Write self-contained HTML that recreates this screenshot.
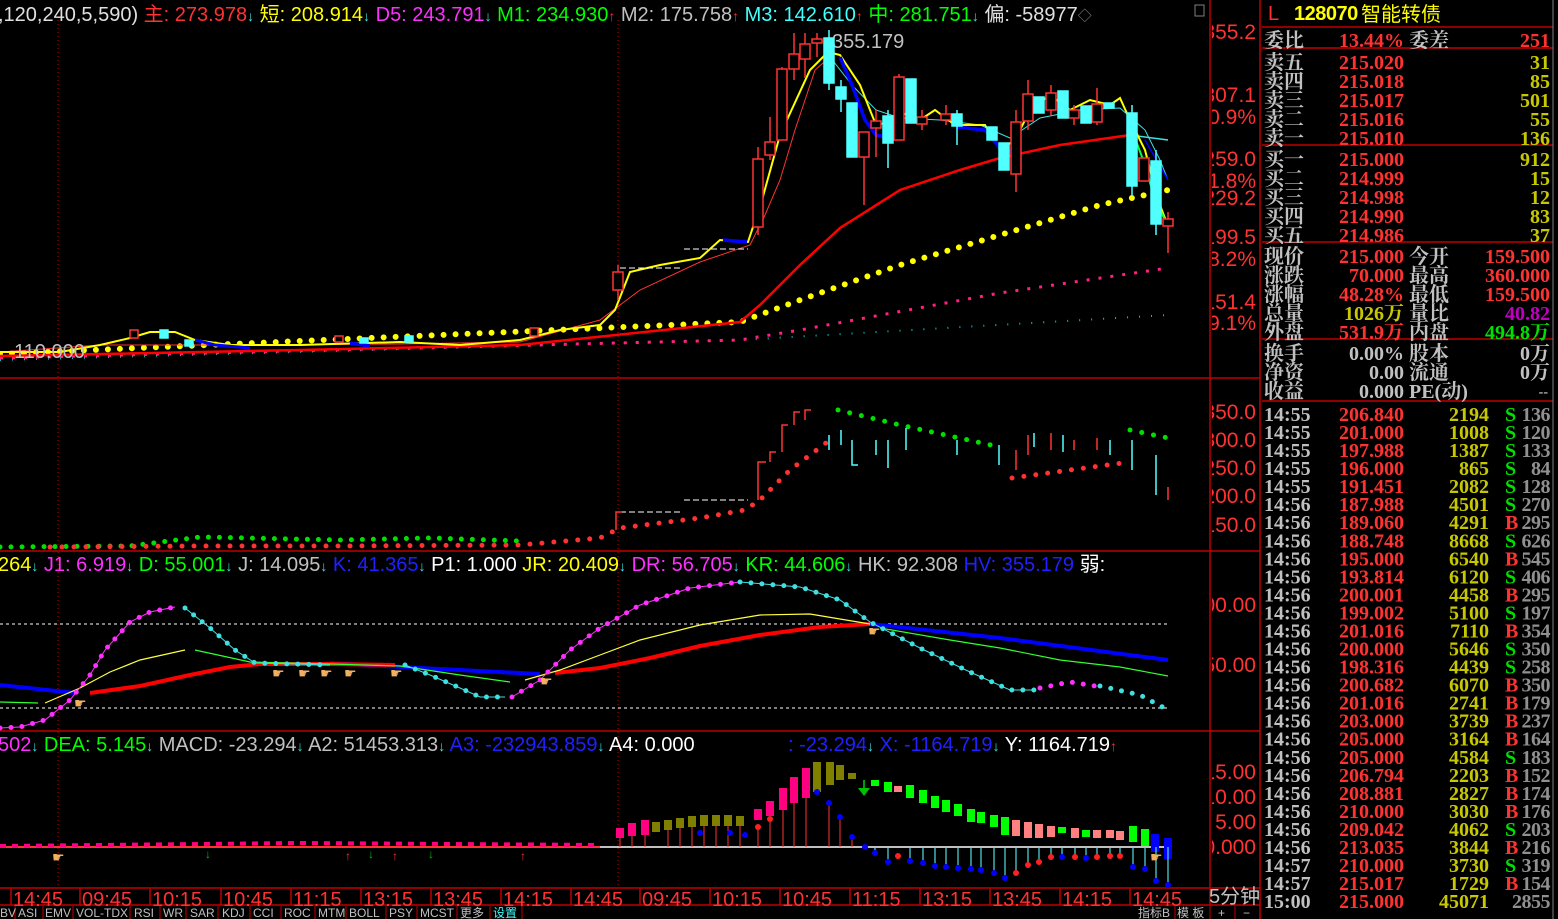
<!DOCTYPE html>
<html><head><meta charset="utf-8"><style>
html,body{margin:0;padding:0;background:#000;width:1558px;height:919px;overflow:hidden}
svg{display:block}
.h{font-family:"Liberation Sans","Noto Sans CJK SC",sans-serif;font-size:20px}
.ax{font-family:"Liberation Sans",sans-serif;font-size:21px;fill:#ff3232;text-anchor:end}
.r{font-family:"Liberation Serif","Noto Serif CJK SC",serif;font-size:20px;font-weight:bold}
.t{font-family:"Liberation Sans","Noto Sans CJK SC",sans-serif;font-size:12px;fill:#c0c0c0}
.e{text-anchor:end}
</style></head><body>
<svg width="1558" height="919" viewBox="0 0 1558 919" xmlns="http://www.w3.org/2000/svg">
<defs><clipPath id="axc"><rect x="1212" y="0" width="48" height="888"/></clipPath></defs>
<rect width="1558" height="919" fill="#000"/>
<g stroke="#c00000" stroke-width="1.5" fill="none">
<path d="M0 378H1260M0 551H1260M0 731H1260M0 888H1260M0 905H1260M1210 0V905M1260 0V919"/>
<path d="M1262 27H1553M1262 48H1553M1262 145H1553M1262 242H1553M1262 339H1553M1262 401H1553"/>
</g>
<path d="M1553 0V919" stroke="#808080"/>
<path d="M58 20V888M618 20V888" stroke="#c00000" stroke-dasharray="1 3"/>

<text class="h" y="21" x="-2"><tspan fill="#e0e0e0">,120,240,5,590)</tspan><tspan fill="#ff3232"> 主: 273.978</tspan><tspan fill="#40e0e0" font-size="14">↓</tspan><tspan fill="#ffff00"> 短: 208.914</tspan><tspan fill="#40e0e0" font-size="14">↓</tspan><tspan fill="#ff30ff"> D5: 243.791</tspan><tspan fill="#40e0e0" font-size="14">↓</tspan><tspan fill="#00ff00"> M1: 234.930</tspan><tspan fill="#ff3232" font-size="14">↑</tspan><tspan fill="#c0c0c0"> M2: 175.758</tspan><tspan fill="#ff3232" font-size="14">↑</tspan><tspan fill="#40ffff"> M3: 142.610</tspan><tspan fill="#ff3232" font-size="14">↑</tspan><tspan fill="#00ff00"> 中: 281.751</tspan><tspan fill="#40e0e0" font-size="14">↓</tspan><tspan fill="#e0e0e0"> 偏: -58977</tspan><tspan fill="#808080" font-size="14">◇</tspan></text>
<rect x="1195" y="5" width="9" height="11" fill="none" stroke="#808080"/>

<g clip-path="url(#axc)">
<text class="ax" x="1256" y="39">355.2</text>
<text class="ax" x="1256" y="102">307.1</text>
<text class="ax" x="1256" y="124">10.9%</text>
<text class="ax" x="1256" y="166">259.0</text>
<text class="ax" x="1256" y="188">21.8%</text>
<text class="ax" x="1256" y="205">229.2</text>
<text class="ax" x="1256" y="244">199.5</text>
<text class="ax" x="1256" y="266">38.2%</text>
<text class="ax" x="1256" y="309">151.4</text>
<text class="ax" x="1256" y="330">49.1%</text>
<text class="ax" x="1256" y="419">350.0</text>
<text class="ax" x="1256" y="447">300.0</text>
<text class="ax" x="1256" y="475">250.0</text>
<text class="ax" x="1256" y="503">200.0</text>
<text class="ax" x="1256" y="532">150.0</text>
<text class="ax" x="1256" y="612">100.00</text>
<text class="ax" x="1256" y="672">50.00</text>
<text class="ax" x="1256" y="779">15.00</text>
<text class="ax" x="1256" y="804">10.00</text>
<text class="ax" x="1256" y="829">5.00</text>
<text class="ax" x="1256" y="854">0.000</text>
</g>

<polyline fill="none" stroke="#00c0c0" stroke-width="2" stroke-dasharray="1 11" points="0,360 740,340 1168,315"/>
<polyline fill="none" stroke="#ff2080" stroke-width="3" stroke-dasharray="3 9" points="0,358 740,340 800,330 1000,293 1168,268"/>
<polyline fill="none" stroke="#ffff00" stroke-width="6" stroke-linecap="round" stroke-dasharray="0 12" points="0,354 740,322 800,300 900,265 1000,235 1100,205 1168,190"/>
<polyline fill="none" stroke="#ff0000" stroke-width="2.5" points="0,356 300,350 520,345 740,322 760,305 800,265 840,228 900,190 960,170 1000,158 1060,145 1130,135"/>
<polyline fill="none" stroke="#40e0e0" stroke-width="1.5" points="1130,135 1168,140"/>
<polyline fill="none" stroke="#ff3232" stroke-width="1" points="0,352 100,345 200,345 400,344 520,342 600,320 640,290 700,262 750,245 765,215 780,180 795,130 815,70 830,57"/>
<polyline fill="none" stroke="#40e0e0" stroke-width="1" points="830,57 852,85 876,110 900,118 940,120 980,125 1010,138 1040,118 1080,110 1120,108 1145,130 1160,160 1168,180"/>
<polyline fill="none" stroke="#0000ff" stroke-width="1.5" points="1145,140 1168,180"/>
<polyline fill="none" stroke="#ffff00" stroke-width="2" points="0,352 60,352 100,345 130,338 150,332 175,332 195,340 230,345 300,345 400,342 460,345 520,340 560,330 600,325 615,310 630,272 660,265 700,258 720,240 748,242 762,200 780,135 810,70 828,52 840,55 860,85 876,125 890,122 900,112 920,120 935,110 955,125 985,125 1000,150 1015,140 1030,110 1050,95 1070,110 1090,100 1110,105 1120,98 1130,120 1145,150 1158,200 1168,226"/>
<g fill="none" stroke="#0000ff" stroke-width="3.5">
<polyline points="723,240 747,242"/>
<polyline points="840,57 852,85 865,120 876,135 887,137"/>
<polyline points="957,127 985,130 1000,148 1015,153"/>
<polyline points="195,340 215,345 250,348" stroke-width="3"/>
<polyline points="350,343 370,346"/>
</g>
<polyline fill="none" stroke="#00ff40" stroke-width="2" points="1132,130 1145,165 1155,200 1168,226"/>
<text x="14" y="358" class="h" fill="#c0c0c0" font-size="19">110.000</text>
<text x="832" y="48" class="h" fill="#c0c0c0">355.179</text>
<path d="M684 249H748M620 268H680" stroke="#fff" stroke-dasharray="6 3"/>
<g stroke="#ff3232" fill="none" stroke-width="1.5">
<path d="M618 265V300M758 147V235M770 117V160M782 67V140M794 33V80M805 33V78M817 33V57M864 132V205M876 110V157M899 74V140M922 110V130M946 105V125M1016 110V192M1028 80V130M1051 85V115M1074 105V125M1097 88V125M1168 212V253"/>
<rect x="613" y="272" width="10" height="18" fill="#000"/>
<rect x="753" y="159" width="10" height="68" fill="#000"/>
<rect x="765" y="142" width="10" height="13" fill="#000"/>
<rect x="777" y="69" width="10" height="71" fill="#000"/>
<rect x="789" y="54" width="10" height="15" fill="#000"/>
<rect x="800" y="44" width="10" height="15" fill="#000"/>
<rect x="812" y="39" width="10" height="4" fill="#000"/>
<rect x="859" y="132" width="10" height="25" fill="#000"/>
<rect x="871" y="121" width="10" height="7" fill="#000"/>
<rect x="894" y="77" width="10" height="63" fill="#000"/>
<rect x="917" y="117" width="10" height="7" fill="#000"/>
<rect x="941" y="114" width="10" height="6" fill="#000"/>
<rect x="1011" y="122" width="10" height="52" fill="#000"/>
<rect x="1023" y="94" width="10" height="27" fill="#000"/>
<rect x="1046" y="93" width="10" height="17" fill="#000"/>
<rect x="1069" y="110" width="10" height="8" fill="#000"/>
<rect x="1092" y="104" width="10" height="18" fill="#000"/>
<rect x="1139" y="158" width="10" height="23" fill="#000"/>
<rect x="1163" y="219" width="10" height="7" fill="#000"/>
<rect x="130" y="330" width="8" height="8" fill="#000"/><rect x="335" y="336" width="8" height="6" fill="#000"/><rect x="530" y="328" width="8" height="8" fill="#000"/>
</g>
<g stroke="#50ffff" fill="#50ffff" stroke-width="1.5">
<path d="M829 30V90M841 80V112M888 110V168M957 110V145M1132 105V195M1156 150V235"/>
<rect x="824" y="38" width="10" height="45"/>
<rect x="836" y="87" width="10" height="12"/>
<rect x="847" y="103" width="10" height="54"/>
<rect x="883" y="116" width="10" height="27"/>
<rect x="906" y="79" width="10" height="44"/>
<rect x="952" y="114" width="10" height="12"/>
<rect x="987" y="127" width="10" height="13"/>
<rect x="999" y="143" width="10" height="27"/>
<rect x="1034" y="97" width="10" height="16"/>
<rect x="1058" y="91" width="10" height="27"/>
<rect x="1081" y="106" width="10" height="17"/>
<rect x="1104" y="103" width="10" height="5"/>
<rect x="1127" y="113" width="10" height="73"/>
<rect x="1151" y="161" width="10" height="63"/>
<rect x="160" y="330" width="8" height="8"/><rect x="185" y="340" width="8" height="6"/><rect x="360" y="338" width="8" height="5"/><rect x="405" y="336" width="8" height="6"/>
</g>

<polyline fill="none" stroke="#00e000" stroke-width="5" stroke-linecap="round" stroke-dasharray="0 11" points="0,547 130,546 200,537 340,540 430,538 520,541"/>
<polyline fill="none" stroke="#ff3232" stroke-width="5" stroke-linecap="round" stroke-dasharray="0 12" points="50,547 200,546 340,546 520,545 600,538 620,528 700,518 745,510 760,500 790,470 830,440"/>
<polyline fill="none" stroke="#00e000" stroke-width="5" stroke-linecap="round" stroke-dasharray="0 12" points="838,410 900,425 1000,447"/>
<polyline fill="none" stroke="#ff3232" stroke-width="5" stroke-linecap="round" stroke-dasharray="0 12" points="1012,478 1070,470 1130,462"/>
<polyline fill="none" stroke="#00e000" stroke-width="5" stroke-linecap="round" stroke-dasharray="0 12" points="1130,430 1168,438"/>
<path d="M620 512H680M684 500H748" stroke="#fff" stroke-dasharray="6 3"/>
<g stroke="#ff3232" stroke-width="1.5" fill="none">
<path d="M616 530V512H622M758 500V462H766M770 462V452H776M782 452V425H788M794 425V412H800M805 420V410H811M1016 470V450M1028 455V435M1051 450V433M1074 450V440M1097 450V438M1168 500V487"/>
</g>
<g stroke="#50ffff" stroke-width="1.5" fill="none">
<path d="M829 435V450M841 430V445M852 440V465H858M876 440V455M888 440V468M906 428V450M957 440V455M999 445V465M1034 433V447M1063 435V452M1132 440V470M1156 455V495M1110 440V455"/>
</g>

<text class="h" y="571" x="-2"><tspan fill="#ffff00">264</tspan><tspan fill="#40e0e0" font-size="14">↓</tspan><tspan fill="#ff30ff"> J1: 6.919</tspan><tspan fill="#40e0e0" font-size="14">↓</tspan><tspan fill="#00ff00"> D: 55.001</tspan><tspan fill="#40e0e0" font-size="14">↓</tspan><tspan fill="#c0c0c0"> J: 14.095</tspan><tspan fill="#40e0e0" font-size="14">↓</tspan><tspan fill="#2020ff"> K: 41.365</tspan><tspan fill="#40e0e0" font-size="14">↓</tspan><tspan fill="#fff"> P1: 1.000</tspan><tspan fill="#ffff00"> JR: 20.409</tspan><tspan fill="#40e0e0" font-size="14">↓</tspan><tspan fill="#ff30ff"> DR: 56.705</tspan><tspan fill="#40e0e0" font-size="14">↓</tspan><tspan fill="#00ff00"> KR: 44.606</tspan><tspan fill="#40e0e0" font-size="14">↓</tspan><tspan fill="#c0c0c0"> HK: 92.308</tspan><tspan fill="#2020ff"> HV: 355.179</tspan><tspan fill="#fff"> 弱: </tspan></text>
<path d="M0 624H1168M0 708H1168" stroke="#fff" stroke-dasharray="3 3"/>
<polyline fill="none" stroke="#0000ff" stroke-width="4" points="0,685 75,693"/>
<polyline fill="none" stroke="#0000ff" stroke-width="4" points="330,663 420,668 540,674"/>
<polyline fill="none" stroke="#0000ff" stroke-width="4" points="870,624 1000,638 1168,660"/>
<polyline fill="none" stroke="#ff0000" stroke-width="4" points="90,693 140,686 190,675 230,667 260,664 330,664 395,665"/>
<polyline fill="none" stroke="#ff0000" stroke-width="4" points="555,673 600,668 650,658 700,646 760,635 820,627 870,624"/>
<polyline fill="none" stroke="#30ff30" stroke-width="1.2" points="195,650 250,662 330,664 400,666 460,675 510,682"/>
<polyline fill="none" stroke="#30ff30" stroke-width="1.2" points="880,628 950,640 1000,648 1060,660 1120,667 1168,676"/>
<polyline fill="none" stroke="#30ff30" stroke-width="1.2" points="0,702 38,703"/>
<polyline fill="none" stroke="#ffff40" stroke-width="1.2" points="45,703 80,688 110,672 140,660 185,650"/>
<polyline fill="none" stroke="#ffff40" stroke-width="1.2" points="525,680 560,670 600,655 640,640 700,625 760,615 810,614 870,624"/>
<g fill="none" stroke-width="1">
<polyline stroke="#ff30ff" points="0,728 20,727 45,720 70,700 90,675 105,650 130,622 150,612 175,607"/>
<polyline stroke="#40e0e0" points="185,608 210,628 235,650 255,663 330,665"/>
<polyline stroke="#40e0e0" points="405,665 430,675 460,688 480,697 505,697"/>
<polyline stroke="#ff30ff" points="512,697 540,680 570,650 600,628 640,605 690,588 740,582"/>
<polyline stroke="#40e0e0" points="740,582 800,587 840,600 870,622 920,648 970,672 1010,690 1035,690"/>
</g>
<g fill="none" stroke-width="5" stroke-linecap="round" stroke-dasharray="0 11">
<polyline stroke="#ff30ff" points="0,728 20,727 45,720 70,700 90,675 105,650 130,622 150,612 175,607"/>
<polyline stroke="#40e0e0" points="185,608 210,628 235,650 255,663 330,665"/>
<polyline stroke="#40e0e0" points="405,665 430,675 460,688 480,697 505,697"/>
<polyline stroke="#ff30ff" points="512,697 540,680 570,650 600,628 640,605 690,588 740,582"/>
<polyline stroke="#40e0e0" points="740,582 800,587 840,600 870,622 920,648 970,672 1010,690 1035,690"/>
<polyline stroke="#ff30ff" points="1040,688 1070,682 1095,686"/>
<polyline stroke="#40e0e0" points="1100,686 1140,695 1168,710"/>
</g>
<g fill="#f0b060" font-size="14" font-family="sans-serif">
<text x="74" y="708">☛</text><text x="272" y="678">☛</text><text x="298" y="678">☛</text><text x="320" y="678">☛</text><text x="344" y="678">☛</text><text x="390" y="678">☛</text><text x="540" y="686">☛</text><text x="868" y="636">☛</text>
</g>

<text class="h" y="751" x="-2"><tspan fill="#ff30ff">502</tspan><tspan fill="#40e0e0" font-size="14">↓</tspan><tspan fill="#00ff00"> DEA: 5.145</tspan><tspan fill="#40e0e0" font-size="14">↓</tspan><tspan fill="#c0c0c0"> MACD: -23.294</tspan><tspan fill="#40e0e0" font-size="14">↓</tspan><tspan fill="#c0c0c0"> A2: 51453.313</tspan><tspan fill="#40e0e0" font-size="14">↓</tspan><tspan fill="#2020ff"> A3: -232943.859</tspan><tspan fill="#40e0e0" font-size="14">↓</tspan><tspan fill="#fff"> A4: 0.000</tspan></text>
<text class="h" y="751" x="788"><tspan fill="#2020ff">: -23.294</tspan><tspan fill="#40e0e0" font-size="14">↓</tspan><tspan fill="#2020ff"> X: -1164.719</tspan><tspan fill="#40e0e0" font-size="14">↓</tspan><tspan fill="#fff"> Y: 1164.719</tspan><tspan fill="#ff3232" font-size="14">↑</tspan></text>
<path d="M0 847H1168" stroke="#fff" stroke-width="1.5"/>
<path d="M0 847H600" stroke="#ff3232" stroke-width="2"/>
<g stroke="#ff3232" stroke-width="1"><path d="M620 847V832M632 847V828M645 847V826M668 847V825M680 847V823M692 847V822M704 847V821M716 847V820M728 847V820M740 847V820M758 847V827M770 847V819M783 847V805M794 847V795M806 847V792M829 847V803M840 847V817M852 847V837"/></g>
<g stroke="#ff0080" stroke-width="8"><path d="M620 838V828M632 836V823M645 835V820M758 820V809M770 816V801M783 810V788M794 803V777M806 798V768"/></g>
<g stroke="#808000" stroke-width="8"><path d="M656 832V822M668 830V820M680 828V818M692 827V816M704 826V815M716 826V815M728 826V815M740 826V816M817 792V762M830 785V762M840 780V765M852 779V773"/></g>
<path d="M864 795V780" stroke="#00a000" stroke-width="2"/><path d="M858 788L864 796L870 788Z" fill="#00c000"/>
<g stroke="#00ff00" stroke-width="8"><path d="M875 786V780M888 792V782M910 798V785M923 803V790M935 808V796M946 812V800M958 816V804M971 822V809M981 823V812M994 827V815M1005 835V817M1062 833V827M1086 837V830M1133 842V826M1145 846V829"/></g>
<g stroke="#ff8080" stroke-width="8"><path d="M898 792V786M1016 836V820M1028 838V822M1039 838V824M1051 837V826M1075 838V828M1097 838V830M1110 838V830M1120 840V831"/></g>
<g stroke="#0000ff" stroke-width="8"><path d="M1155 852V834M1168 859V838"/></g>
<g stroke="#50e0e0" stroke-width="1.2"><path d="M875 847V853M888 847V862M910 847V861M923 847V863M935 847V866M946 847V867M958 847V868M971 847V869M981 847V870M994 847V873M1005 847V878M1016 847V873M1028 847V865M1039 847V862M1051 847V857M1062 847V857M1075 847V857M1086 847V858M1097 847V857M1110 847V856M1120 847V856M1133 847V867M1145 847V869M1156 847V881M1168 847V885"/></g>
<g fill="#0000ff"><circle cx="817" cy="792" r="3"/><circle cx="829" cy="803" r="3"/><circle cx="840" cy="817" r="3"/><circle cx="852" cy="837" r="3"/><circle cx="865" cy="847" r="3"/><circle cx="875" cy="853" r="3"/><circle cx="888" cy="862" r="3"/><circle cx="910" cy="861" r="3"/><circle cx="923" cy="863" r="3"/><circle cx="935" cy="866" r="3"/><circle cx="946" cy="867" r="3"/><circle cx="958" cy="868" r="3"/><circle cx="971" cy="869" r="3"/><circle cx="981" cy="870" r="3"/><circle cx="994" cy="873" r="3"/><circle cx="1005" cy="878" r="3"/><circle cx="1062" cy="857" r="3"/><circle cx="1086" cy="858" r="3"/><circle cx="1133" cy="867" r="3"/><circle cx="1145" cy="869" r="3"/><circle cx="1156" cy="881" r="3"/><circle cx="1168" cy="885" r="3"/><circle cx="700" cy="833" r="3"/><circle cx="730" cy="833" r="3"/><circle cx="745" cy="835" r="3"/></g>
<g fill="#ff2020"><circle cx="1016" cy="873" r="3"/><circle cx="1028" cy="865" r="3"/><circle cx="1039" cy="862" r="3"/><circle cx="1051" cy="857" r="3"/><circle cx="1075" cy="857" r="3"/><circle cx="1097" cy="857" r="3"/><circle cx="1110" cy="856" r="3"/><circle cx="1120" cy="856" r="3"/><circle cx="758" cy="827" r="3"/><circle cx="770" cy="819" r="3"/><circle cx="898" cy="856" r="3"/></g>
<g fill="#ff3232" font-size="12" font-family="sans-serif"><text x="345" y="860">↑</text><text x="392" y="860">↑</text><text x="520" y="860">↑</text></g>
<g fill="#00c000" font-size="12" font-family="sans-serif"><text x="205" y="858">↓</text><text x="368" y="858">↓</text><text x="428" y="858">↓</text></g>
<g fill="#f0b060" font-size="14" font-family="sans-serif"><text x="52" y="862">☛</text><text x="1150" y="862">☛</text></g>
<polyline fill="none" stroke="#ff0080" stroke-width="4" stroke-dasharray="6 6" points="0,846 300,843 600,845"/>

<g stroke="#c00000" stroke-width="1.5"><path d="M11 888V905M80 888V905M150 888V905M221 888V905M291 888V905M361 888V905M431 888V905M501 888V905M571 888V905M640 888V905M710 888V905M780 888V905M850 888V905M920 888V905M990 888V905M1060 888V905M1130 888V905"/></g>
<g class="h" fill="#ff3232" font-size="20">
<text x="13" y="906">14:45</text><text x="82" y="906">09:45</text><text x="152" y="906">10:15</text><text x="223" y="906">10:45</text><text x="293" y="906">11:15</text><text x="363" y="906">13:15</text><text x="433" y="906">13:45</text><text x="503" y="906">14:15</text><text x="573" y="906">14:45</text><text x="642" y="906">09:45</text><text x="712" y="906">10:15</text><text x="782" y="906">10:45</text><text x="852" y="906">11:15</text><text x="922" y="906">13:15</text><text x="992" y="906">13:45</text><text x="1062" y="906">14:15</text><text x="1132" y="906">14:45</text>
</g>
<text x="1209" y="903" class="h" fill="#c0c0c0" font-size="17">5分钟</text>
<g stroke="#c00000"><path d="M15 906V919M43 906V919M73 906V919M130 906V919M160 906V919M186 906V919M218 906V919M250 906V919M281 906V919M315 906V919M346 906V919M386 906V919M417 906V919M457 906V919M490 906V919M522 906V919M1175 906V919M1210 906V919M1235 906V919"/></g>
<g class="t"><text x="0" y="917">BV</text><text x="18" y="917">ASI</text><text x="45" y="917">EMV</text><text x="76" y="917">VOL-TDX</text><text x="134" y="917">RSI</text><text x="163" y="917">WR</text><text x="190" y="917">SAR</text><text x="222" y="917">KDJ</text><text x="253" y="917">CCI</text><text x="284" y="917">ROC</text><text x="318" y="917">MTM</text><text x="349" y="917">BOLL</text><text x="389" y="917">PSY</text><text x="420" y="917">MCST</text><text x="460" y="917">更多</text><text x="493" y="917" fill="#40ffff">设置</text><text x="1138" y="917">指标B</text><text x="1177" y="917">模 板</text><text x="1218" y="917">+</text><text x="1243" y="917">−</text></g>

<text x="1268" y="20" fill="#ff3232" class="h" font-size="16">L</text>
<text x="1294" y="20" fill="#ffff00" class="h" font-size="14" font-weight="bold" letter-spacing="-0.5">128070</text>
<text x="1361" y="21" fill="#ffff00" class="h" font-size="17">智能转债</text>
<g class="r">
<text x="1264" y="47" fill="#c0c0c0">委比</text><text x="1404" y="47" fill="#ff3232" class="e">13.44%</text><text x="1409" y="47" fill="#c0c0c0">委差</text><text x="1550" y="47" fill="#ff3232" class="e">251</text>
<g fill="#c0c0c0"><text x="1264" y="69">卖五</text><text x="1264" y="88">卖四</text><text x="1264" y="107">卖三</text><text x="1264" y="126">卖二</text><text x="1264" y="145">卖一</text>
<text x="1264" y="166">买一</text><text x="1264" y="185">买二</text><text x="1264" y="204">买三</text><text x="1264" y="223">买四</text><text x="1264" y="242">买五</text></g>
<g fill="#ff3232" class="e"><text x="1404" y="69">215.020</text><text x="1404" y="88">215.018</text><text x="1404" y="107">215.017</text><text x="1404" y="126">215.016</text><text x="1404" y="145">215.010</text>
<text x="1404" y="166">215.000</text><text x="1404" y="185">214.999</text><text x="1404" y="204">214.998</text><text x="1404" y="223">214.990</text><text x="1404" y="242">214.986</text></g>
<g fill="#c8c800" class="e"><text x="1550" y="69">31</text><text x="1550" y="88">85</text><text x="1550" y="107">501</text><text x="1550" y="126">55</text><text x="1550" y="145">136</text>
<text x="1550" y="166">912</text><text x="1550" y="185">15</text><text x="1550" y="204">12</text><text x="1550" y="223">83</text><text x="1550" y="242">37</text></g>
<g fill="#c0c0c0"><text x="1264" y="263">现价</text><text x="1264" y="282">涨跌</text><text x="1264" y="301">涨幅</text><text x="1264" y="320">总量</text><text x="1264" y="339">外盘</text>
<text x="1409" y="263">今开</text><text x="1409" y="282">最高</text><text x="1409" y="301">最低</text><text x="1409" y="320">量比</text><text x="1409" y="339">内盘</text></g>
<g class="e"><text x="1404" y="263" fill="#ff3232">215.000</text><text x="1404" y="282" fill="#ff3232">70.000</text><text x="1404" y="301" fill="#ff3232">48.28%</text><text x="1404" y="320" fill="#c8c800">1026万</text><text x="1404" y="339" fill="#ff3232">531.9万</text>
<text x="1550" y="263" fill="#ff3232">159.500</text><text x="1550" y="282" fill="#ff3232">360.000</text><text x="1550" y="301" fill="#ff3232">159.500</text><text x="1550" y="320" fill="#c000c0">40.82</text><text x="1550" y="339" fill="#00e000">494.8万</text></g>
<g fill="#c0c0c0"><text x="1264" y="360">换手</text><text x="1264" y="379">净资</text><text x="1264" y="398">收益</text><text x="1409" y="360">股本</text><text x="1409" y="379">流通</text><text x="1409" y="398">PE(动)</text></g>
<g fill="#c0c0c0" class="e"><text x="1404" y="360">0.00%</text><text x="1404" y="379">0.00</text><text x="1404" y="398">0.000</text><text x="1550" y="360">0万</text><text x="1550" y="379">0万</text><text x="1548" y="396" font-size="14">--</text></g>
</g>
<g class="r">
<g fill="#c0c0c0"><text x="1264" y="421">14:55</text><text x="1264" y="439">14:55</text><text x="1264" y="457.1">14:55</text><text x="1264" y="475.1">14:55</text><text x="1264" y="493.2">14:55</text><text x="1264" y="511.2">14:56</text><text x="1264" y="529.2">14:56</text><text x="1264" y="547.3">14:56</text><text x="1264" y="565.3">14:56</text><text x="1264" y="583.4">14:56</text><text x="1264" y="601.4">14:56</text><text x="1264" y="619.4">14:56</text><text x="1264" y="637.5">14:56</text><text x="1264" y="655.5">14:56</text><text x="1264" y="673.6">14:56</text><text x="1264" y="691.6">14:56</text><text x="1264" y="709.6">14:56</text><text x="1264" y="727.7">14:56</text><text x="1264" y="745.7">14:56</text><text x="1264" y="763.8">14:56</text><text x="1264" y="781.8">14:56</text><text x="1264" y="799.8">14:56</text><text x="1264" y="817.9">14:56</text><text x="1264" y="835.9">14:56</text><text x="1264" y="853.9">14:56</text><text x="1264" y="872">14:57</text><text x="1264" y="890">14:57</text><text x="1264" y="908">15:00</text></g>
<g fill="#ff3232" class="e"><text x="1404" y="421">206.840</text><text x="1404" y="439">201.000</text><text x="1404" y="457.1">197.988</text><text x="1404" y="475.1">196.000</text><text x="1404" y="493.2">191.451</text><text x="1404" y="511.2">187.988</text><text x="1404" y="529.2">189.060</text><text x="1404" y="547.3">188.748</text><text x="1404" y="565.3">195.000</text><text x="1404" y="583.4">193.814</text><text x="1404" y="601.4">200.001</text><text x="1404" y="619.4">199.002</text><text x="1404" y="637.5">201.016</text><text x="1404" y="655.5">200.000</text><text x="1404" y="673.6">198.316</text><text x="1404" y="691.6">200.682</text><text x="1404" y="709.6">201.016</text><text x="1404" y="727.7">203.000</text><text x="1404" y="745.7">205.000</text><text x="1404" y="763.8">205.000</text><text x="1404" y="781.8">206.794</text><text x="1404" y="799.8">208.881</text><text x="1404" y="817.9">210.000</text><text x="1404" y="835.9">209.042</text><text x="1404" y="853.9">213.035</text><text x="1404" y="872">210.000</text><text x="1404" y="890">215.017</text><text x="1404" y="908">215.000</text></g>
<g fill="#c8c800" class="e"><text x="1489" y="421">2194</text><text x="1489" y="439">1008</text><text x="1489" y="457.1">1387</text><text x="1489" y="475.1">865</text><text x="1489" y="493.2">2082</text><text x="1489" y="511.2">4501</text><text x="1489" y="529.2">4291</text><text x="1489" y="547.3">8668</text><text x="1489" y="565.3">6540</text><text x="1489" y="583.4">6120</text><text x="1489" y="601.4">4458</text><text x="1489" y="619.4">5100</text><text x="1489" y="637.5">7110</text><text x="1489" y="655.5">5646</text><text x="1489" y="673.6">4439</text><text x="1489" y="691.6">6070</text><text x="1489" y="709.6">2741</text><text x="1489" y="727.7">3739</text><text x="1489" y="745.7">3164</text><text x="1489" y="763.8">4584</text><text x="1489" y="781.8">2203</text><text x="1489" y="799.8">2827</text><text x="1489" y="817.9">3030</text><text x="1489" y="835.9">4062</text><text x="1489" y="853.9">3844</text><text x="1489" y="872">3730</text><text x="1489" y="890">1729</text><text x="1489" y="908">45071</text></g>
<g><text x="1505" y="421" fill="#00e000">S</text><text x="1505" y="439" fill="#00e000">S</text><text x="1505" y="457.1" fill="#00e000">S</text><text x="1505" y="475.1" fill="#00e000">S</text><text x="1505" y="493.2" fill="#00e000">S</text><text x="1505" y="511.2" fill="#00e000">S</text><text x="1505" y="529.2" fill="#ff3232">B</text><text x="1505" y="547.3" fill="#00e000">S</text><text x="1505" y="565.3" fill="#ff3232">B</text><text x="1505" y="583.4" fill="#00e000">S</text><text x="1505" y="601.4" fill="#ff3232">B</text><text x="1505" y="619.4" fill="#00e000">S</text><text x="1505" y="637.5" fill="#ff3232">B</text><text x="1505" y="655.5" fill="#00e000">S</text><text x="1505" y="673.6" fill="#00e000">S</text><text x="1505" y="691.6" fill="#ff3232">B</text><text x="1505" y="709.6" fill="#ff3232">B</text><text x="1505" y="727.7" fill="#ff3232">B</text><text x="1505" y="745.7" fill="#ff3232">B</text><text x="1505" y="763.8" fill="#00e000">S</text><text x="1505" y="781.8" fill="#ff3232">B</text><text x="1505" y="799.8" fill="#ff3232">B</text><text x="1505" y="817.9" fill="#ff3232">B</text><text x="1505" y="835.9" fill="#00e000">S</text><text x="1505" y="853.9" fill="#ff3232">B</text><text x="1505" y="872" fill="#00e000">S</text><text x="1505" y="890" fill="#ff3232">B</text></g>
<g fill="#909090" class="e" letter-spacing="-0.5"><text x="1550" y="421">136</text><text x="1550" y="439">120</text><text x="1550" y="457.1">133</text><text x="1550" y="475.1">84</text><text x="1550" y="493.2">128</text><text x="1550" y="511.2">270</text><text x="1550" y="529.2">295</text><text x="1550" y="547.3">626</text><text x="1550" y="565.3">545</text><text x="1550" y="583.4">406</text><text x="1550" y="601.4">295</text><text x="1550" y="619.4">197</text><text x="1550" y="637.5">354</text><text x="1550" y="655.5">350</text><text x="1550" y="673.6">258</text><text x="1550" y="691.6">350</text><text x="1550" y="709.6">179</text><text x="1550" y="727.7">237</text><text x="1550" y="745.7">164</text><text x="1550" y="763.8">183</text><text x="1550" y="781.8">152</text><text x="1550" y="799.8">174</text><text x="1550" y="817.9">176</text><text x="1550" y="835.9">203</text><text x="1550" y="853.9">216</text><text x="1550" y="872">319</text><text x="1550" y="890">154</text><text x="1550" y="908">2855</text></g>
</g>
</svg>
</body></html>
